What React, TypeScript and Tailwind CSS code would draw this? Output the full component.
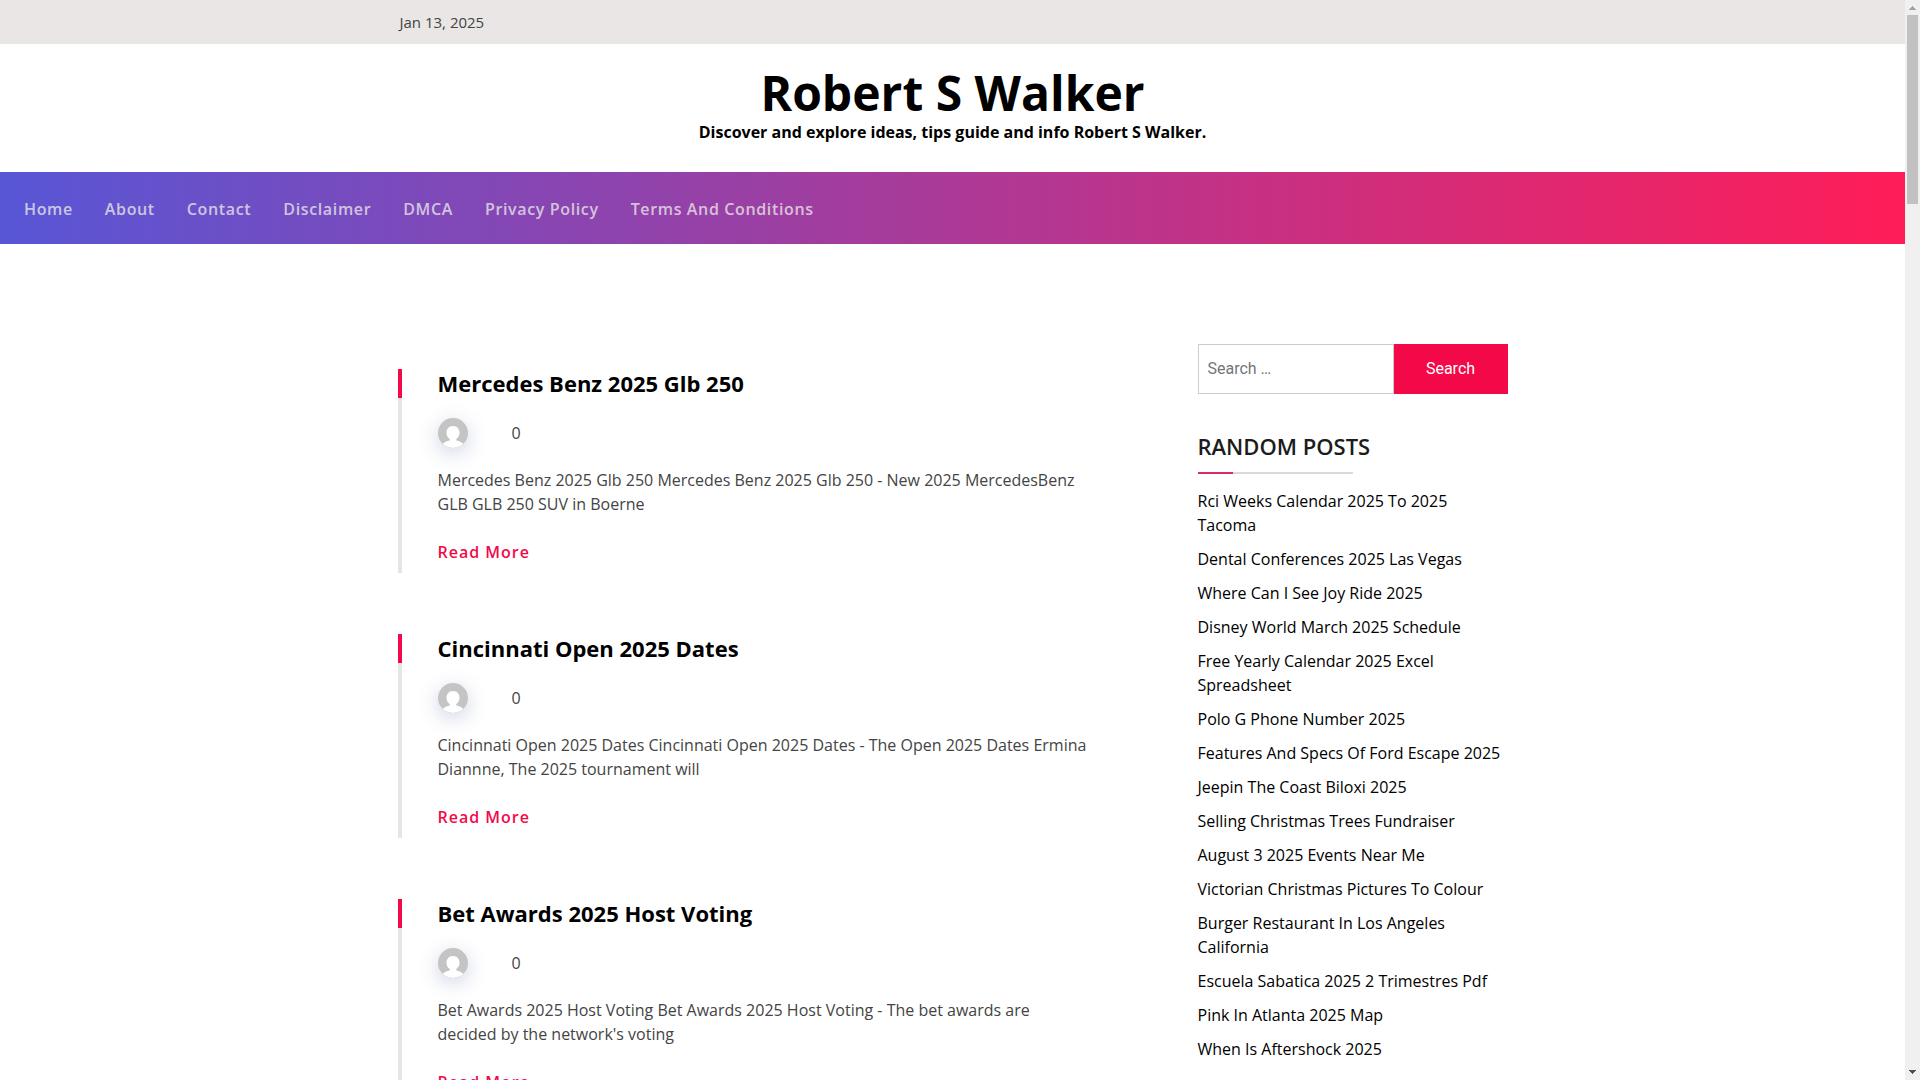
const navItems = [
  'Home',
  'About',
  'Contact',
  'Disclaimer',
  'DMCA',
  'Privacy Policy',
  'Terms And Conditions',
];

const posts = [
  {
    title: 'Mercedes Benz 2025 Glb 250',
    excerpt:
      'Mercedes Benz 2025 Glb 250 Mercedes Benz 2025 Glb 250 - New 2025 MercedesBenz GLB GLB 250 SUV in Boerne',
  },
  {
    title: 'Cincinnati Open 2025 Dates',
    excerpt:
      'Cincinnati Open 2025 Dates Cincinnati Open 2025 Dates - The Open 2025 Dates Ermina Diannne, The 2025 tournament will',
  },
  {
    title: 'Bet Awards 2025 Host Voting',
    excerpt:
      "Bet Awards 2025 Host Voting Bet Awards 2025 Host Voting - The bet awards are decided by the network's voting",
  },
];

const randomPosts = [
  'Rci Weeks Calendar 2025 To 2025 Tacoma',
  'Dental Conferences 2025 Las Vegas',
  'Where Can I See Joy Ride 2025',
  'Disney World March 2025 Schedule',
  'Free Yearly Calendar 2025 Excel Spreadsheet',
  'Polo G Phone Number 2025',
  'Features And Specs Of Ford Escape 2025',
  'Jeepin The Coast Biloxi 2025',
  'Selling Christmas Trees Fundraiser',
  'August 3 2025 Events Near Me',
  'Victorian Christmas Pictures To Colour',
  'Burger Restaurant In Los Angeles California',
  'Escuela Sabatica 2025 2 Trimestres Pdf',
  'Pink In Atlanta 2025 Map',
  'When Is Aftershock 2025',
];

function Avatar() {
  return (
    <svg
      viewBox="0 0 30 30"
      aria-hidden="true"
      className="size-[30px] overflow-hidden rounded-full bg-[#c4c4c4] shadow-[0_5px_20px_rgba(65,80,148,0.25)]"
    >
      <path
        fill="#fff"
        d="M15 8c-3.900 0-6.500 2.900-6.500 6.700 0 2.700 1.300 5 3.200 6.200v1.700c-3 .5-5.400 1.600-7 3.400C7.300 28.600 11 30 15 30s7.700-1.400 10.300-4c-1.600-1.800-4-2.900-7-3.400v-1.700c1.900-1.200 3.200-3.500 3.200-6.200C21.500 10.900 18.900 8 15 8z"
      />
    </svg>
  );
}

function Post({ title, excerpt }: { title: string; excerpt: string }) {
  return (
    <article className="flex">
      <div className="w-1 shrink-0 bg-[#e5e5e5]">
        <div className="h-[29px] bg-[#f30948]" />
      </div>
      <div className="px-9 pb-[9px]">
        <h2 className="text-[22px] leading-7 font-bold text-black">
          <a href="#">{title}</a>
        </h2>
        <div className="mt-[21px] flex items-center gap-11">
          <a href="#" aria-label="Author">
            <Avatar />
          </a>
          <span>0</span>
        </div>
        <p className="mt-5">{excerpt}</p>
        <a href="#" className="mt-6 inline-block align-top font-semibold tracking-[1px] text-[#f30948]">
          Read More
        </a>
      </div>
    </article>
  );
}

function ScrollBar() {
  return (
    <div aria-hidden="true" className="flex w-[15px] shrink-0 flex-col items-center bg-[#f0f0f0]">
      <svg width="15" height="15" viewBox="0 0 15 15" shapeRendering="crispEdges">
        <path fill="#a3a3a3" d="M7 6h1v1h1v1h1v1h1v1H4V9h1V8h1V7h1z" />
      </svg>
      <div className="h-[17.5%] w-[11px] bg-[#c1c1c1]" />
      <svg className="mt-auto" width="15" height="15" viewBox="0 0 15 15" shapeRendering="crispEdges">
        <path fill="#505050" d="M4 5h7v1h-1v1H9v1H8v1H7V8H6V7H5V6H4z" />
      </svg>
    </div>
  );
}

export default function App() {
  return (
    <div className="flex h-screen overflow-hidden bg-white font-['Open_Sans',sans-serif] text-base leading-6 text-[#444]">
      <div className="min-w-0 flex-1 overflow-hidden">
        <div className="bg-[#e9e6e5] py-[11px]">
          <div className="mx-auto max-w-[1140px] px-[17px] text-[15px] leading-[22px]">Jan 13, 2025</div>
        </div>

        <header className="pt-[22px] pb-7 text-center font-bold text-black">
          <h1 className="text-5xl leading-[54px]">
            <a href="#">Robert S Walker</a>
          </h1>
          <p>Discover and explore ideas, tips guide and info Robert S Walker.</p>
        </header>

        <nav className="bg-linear-to-r/srgb from-[#5856d6] to-[#ff1d58] px-6 pt-[25px] pb-[23px]">
          <ul className="flex gap-8">
            {navItems.map((item) => (
              <li key={item}>
                <a href="#" className="font-semibold tracking-[0.04em] text-[#e9e6e5]/80">
                  {item}
                </a>
              </li>
            ))}
          </ul>
        </nav>

        <div className="mx-auto flex max-w-[1140px] px-[15px] pt-[100px]">
          <main className="flex min-w-0 flex-1 flex-col gap-[61px] pt-[25px]">
            {posts.map((post) => (
              <Post key={post.title} {...post} />
            ))}
          </main>

          <aside className="ml-[70px] w-[310px] shrink-0">
            <form role="search" className="flex h-[50px] font-[Roboto,sans-serif]">
              <input
                type="search"
                aria-label="Search for"
                placeholder="Search …"
                className="min-w-0 flex-1 border border-[#ccc] px-[9px] placeholder:text-[#757575]"
              />
              <button type="button" className="w-[114px] bg-[#f30948] text-white">
                Search
              </button>
            </form>

            <h2 className="mt-[38px] text-[22px] leading-7 font-semibold text-[#1c1c1c]">RANDOM POSTS</h2>
            <div className="mt-3 h-0.5 w-1/2 bg-[#dadada]">
              <div className="h-full w-[35px] bg-[#d62e6b]" />
            </div>
            <ul className="mt-[15px] flex flex-col gap-[10px] text-black">
              {randomPosts.map((item) => (
                <li key={item}>
                  <a href="#">{item}</a>
                </li>
              ))}
            </ul>
          </aside>
        </div>
      </div>
      <ScrollBar />
    </div>
  );
}
